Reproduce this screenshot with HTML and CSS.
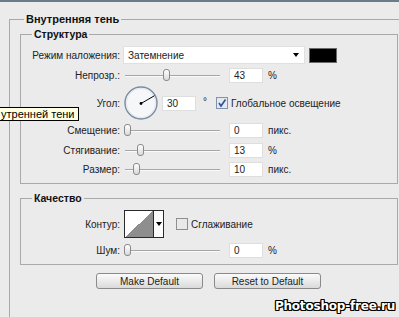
FILE: index.html
```html
<!DOCTYPE html>
<html lang="ru">
<head>
    <meta charset="UTF-8">
    <meta name="viewport" content="width=device-width, initial-scale=1.0">
    <title>Внутренняя тень</title>
    <link rel="stylesheet" href="styles.css">
</head>
<body>
    <div class="topbar"></div>
    <fieldset class="panel">
        <legend>Внутренняя тень</legend>

        <fieldset class="group group-structure">
            <legend>Структура</legend>
            <div class="row row-blend">
                <span class="label">Режим наложения:</span>
                <div class="select">
                    <span>Затемнение</span>
                    <span class="arrow"></span>
                </div>
                <div class="swatch"></div>
            </div>
            <div class="row row-opacity">
                <span class="label">Непрозр.:</span>
                <div class="slider"><span class="thumb" style="left: 40px"></span></div>
                <input class="num" type="text" value="43">
                <span class="unit">%</span>
            </div>
            <div class="row row-angle">
                <span class="label">Угол:</span>
                <svg class="dial" width="34" height="34" viewBox="0 0 34 34">
                    <circle cx="17" cy="17" r="16" fill="#f6f7f9" stroke="#7b8ba0" stroke-width="1.4"/>
                    <circle cx="17" cy="17" r="14.6" fill="none" stroke="#e2e7ee" stroke-width="1"/>
                    <line x1="17" y1="17.5" x2="30.5" y2="9.7" stroke="#000" stroke-width="1"/>
                    <circle cx="17" cy="17.5" r="1.4" fill="#000"/>
                </svg>
                <input class="num num-angle" type="text" value="30">
                <span class="deg">°</span>
                <svg class="check" width="12" height="12" viewBox="0 0 12 12">
                    <rect x="0.5" y="0.5" width="11" height="11" fill="#e4e8f0" stroke="#7f93b0"/>
                    <path d="M3 6 L5 9 L9.5 2.5" fill="none" stroke="#2d4f9e" stroke-width="1.6"/>
                </svg>
                <span class="check-text">Глобальное освещение</span>
            </div>
            <div class="row row-slide">
                <span class="label">Смещение:</span>
                <div class="slider"><span class="thumb" style="left: 1px"></span></div>
                <input class="num" type="text" value="0">
                <span class="unit">пикс.</span>
            </div>
            <div class="row row-slide">
                <span class="label">Стягивание:</span>
                <div class="slider"><span class="thumb" style="left: 14px"></span></div>
                <input class="num" type="text" value="13">
                <span class="unit">%</span>
            </div>
            <div class="row row-slide row-last">
                <span class="label">Размер:</span>
                <div class="slider"><span class="thumb" style="left: 10px"></span></div>
                <input class="num" type="text" value="10">
                <span class="unit">пикс.</span>
            </div>
        </fieldset>

        <fieldset class="group group-quality">
            <legend>Качество</legend>
            <div class="row row-contour">
                <span class="label">Контур:</span>
                <div class="contour">
                    <span class="contour-preview"></span>
                    <span class="contour-drop"><span class="arrow"></span></span>
                </div>
                <svg class="check check-off" width="12" height="12" viewBox="0 0 12 12">
                    <rect x="0.5" y="0.5" width="11" height="11" fill="#e9e9e9" stroke="#8e8e8e"/>
                </svg>
                <span class="check-text">Сглаживание</span>
            </div>
            <div class="row row-noise">
                <span class="label">Шум:</span>
                <div class="slider"><span class="thumb" style="left: 1px"></span></div>
                <input class="num" type="text" value="0">
                <span class="unit">%</span>
            </div>
        </fieldset>

        <div class="buttons">
            <button>Make Default</button>
            <button>Reset to Default</button>
        </div>
    </fieldset>

    <div class="tooltip">утренней тени</div>
    <div class="watermark">Photoshop-free.ru</div>
</body>
</html>
```

FILE: styles.css
```css
body {
    margin: 0;
    width: 399px;
    height: 317px;
    overflow: hidden;
    position: relative;
    background: #ebebeb;
    font-family: 'Liberation Sans', Arial, sans-serif;
    font-size: 10px;
    color: #222;
}
.topbar {
    height: 2px;
    background: #6c7b8b;
}
fieldset {
    margin: 0;
    border: 1px solid #a9a9a9;
    box-sizing: border-box;
    min-width: 0;
}
legend {
    font-weight: bold;
    line-height: 14px;
    padding: 0 2px;
    color: #111;
}
.panel {
    margin: 10px 0 0 9px;
    width: 430px;
    height: 340px;
    padding: 0 0 0 10px;
    border-right: none;
    border-bottom: none;
}
.panel > legend {
    margin-left: 4px;
    font-size: 11px;
}
.group {
    width: 378px;
    padding: 0;
}
.group > legend {
    margin-left: 11px;
    font-size: 10.5px;
}
.group-structure {
    margin-top: 1px;
    padding-bottom: 4px;
}
.group-quality {
    margin-top: 7px;
    padding-bottom: 3px;
}
.row {
    display: flex;
    align-items: center;
}
.label {
    flex: none;
    width: 99px;
    margin-right: 3px;
    text-align: right;
}
.row-blend {
    margin-top: 5px;
    height: 18px;
}
.row-opacity {
    height: 22px;
}
.row-angle {
    height: 34px;
}
.row-slide {
    height: 20px;
}
.row-last {
    height: 19px;
}
.row-contour {
    margin-top: 5px;
    height: 28px;
}
.row-noise {
    margin-top: 2px;
    height: 21px;
}
.select {
    width: 182px;
    height: 18px;
    box-sizing: border-box;
    background: #fff;
    border: 1px solid #e0e0e0;
    display: flex;
    align-items: center;
    padding-left: 4px;
}
.arrow {
    width: 0;
    height: 0;
    border-left: 3px solid transparent;
    border-right: 3px solid transparent;
    border-top: 4px solid #000;
}
.select .arrow {
    margin-left: auto;
    margin-right: 5px;
}
.swatch {
    width: 28px;
    height: 15px;
    box-sizing: border-box;
    margin-left: 4px;
    background: #000;
    border: 1px solid #6a6a6a;
}
.slider {
    flex: none;
    position: relative;
    width: 97px;
    height: 13px;
}
.slider::before {
    content: "";
    position: absolute;
    left: 2px;
    right: 0;
    top: 6px;
    height: 1px;
    background: #a6a6a6;
    border-bottom: 1px solid #fafafa;
}
.thumb {
    position: absolute;
    top: 0;
    width: 7px;
    height: 12px;
    box-sizing: border-box;
    border: 1px solid #8a8a8a;
    border-radius: 3px;
    background: linear-gradient(#fff, #d9d9d9);
}
.num {
    flex: none;
    width: 34px;
    height: 15px;
    box-sizing: border-box;
    margin: 0 0 0 9px;
    padding: 0 4px;
    border: 1px solid #dedede;
    background: #fff;
    font-family: inherit;
    font-size: 10px;
    color: #222;
    outline: none;
}
.unit {
    margin-left: 5px;
}
.dial {
    flex: none;
    margin-left: 1px;
}
.num-angle {
    margin-left: 4px;
}
.deg {
    margin-left: 7px;
    align-self: flex-start;
    margin-top: 10px;
}
.check {
    flex: none;
    margin-left: 9px;
}
.check-text {
    margin-left: 3px;
}
.check-off {
    margin-left: 12px;
}
.contour {
    flex: none;
    display: flex;
    width: 40px;
    height: 28px;
    box-sizing: border-box;
    margin-left: 1px;
    border: 1px solid #2a2a2a;
}
.contour-preview {
    flex: 1;
    background: linear-gradient(to bottom right, #fff 50%, #8e8e8e 50%);
}
.contour-drop {
    width: 9px;
    border-left: 1px solid #2a2a2a;
    background: #fdfdfd;
    display: flex;
    align-items: center;
    justify-content: center;
}
.buttons {
    display: flex;
    gap: 11px;
    margin: 8px 0 0 76px;
}
button {
    width: 107px;
    height: 16px;
    padding: 0;
    border: 1px solid #8a8a8a;
    border-radius: 3px;
    background: linear-gradient(#fbfbfb, #dadada);
    font-family: inherit;
    font-size: 10px;
    color: #222;
}
.tooltip {
    position: absolute;
    left: -3px;
    top: 107px;
    padding: 0 3px;
    line-height: 12px;
    font-size: 11px;
    background: #ffffe1;
    border: 1px solid #000;
    color: #000;
}
.watermark {
    position: absolute;
    right: 4px;
    bottom: 4px;
    font-family: 'DejaVu Sans', sans-serif;
    font-weight: bold;
    font-size: 12px;
    letter-spacing: -0.2px;
    color: #fff;
    text-shadow: 1px 0 #000, -1px 0 #000, 0 1px #000, 0 -1px #000,
                 1px 1px #000, -1px -1px #000, 1px -1px #000, -1px 1px #000;
}
```
